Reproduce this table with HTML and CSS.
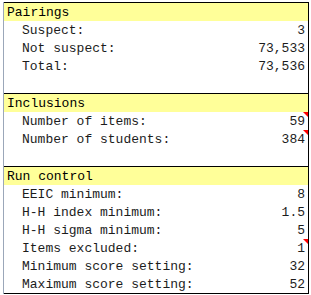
FILE: index.html
```html
<!DOCTYPE html>
<html>
<head>
<meta charset="utf-8">
<link rel="stylesheet" href="styles.css">
</head>
<body>
<div class="sheet">
  <section class="sec">
    <div class="head">Pairings</div>
    <div class="row"><span class="lab">Suspect:</span><span class="val">3</span></div>
    <div class="row"><span class="lab">Not suspect:</span><span class="val">73,533</span></div>
    <div class="row"><span class="lab">Total:</span><span class="val">73,536</span></div>
    <div class="row"></div>
  </section>
  <section class="sec">
    <div class="head">Inclusions</div>
    <div class="row"><span class="lab">Number of items:</span><span class="val note">59</span></div>
    <div class="row"><span class="lab">Number of students:</span><span class="val note">384</span></div>
    <div class="row"></div>
  </section>
  <section class="sec last">
    <div class="head">Run control</div>
    <div class="row"><span class="lab">EEIC minimum:</span><span class="val">8</span></div>
    <div class="row"><span class="lab">H-H index minimum:</span><span class="val">1.5</span></div>
    <div class="row"><span class="lab">H-H sigma minimum:</span><span class="val">5</span></div>
    <div class="row"><span class="lab">Items excluded:</span><span class="val note">1</span></div>
    <div class="row"><span class="lab">Minimum score setting:</span><span class="val">32</span></div>
    <div class="row"><span class="lab">Maximum score setting:</span><span class="val">52</span></div>
  </section>
</div>
</body>
</html>
```
FILE: styles.css
```css
html, body {
  margin: 0;
  padding: 0;
  background: #fff;
}
body {
  font-family: "Liberation Mono", "Courier New", monospace;
  font-size: 13px;
  color: #1c1c1c;
}
.sheet {
  margin: 2px 0 0 3px;
  width: 304px;
  border-left: 1px solid #9ba7b9;
  border-right: 1px solid #000;
}
.sec {
  border-top: 1px solid #000;
}
.sec.last {
  border-bottom: 1px solid #000;
}
.head {
  box-sizing: border-box;
  height: 18px;
  padding-top: 2px;
  line-height: 16px;
  background: #ffff99;
  padding-left: 3px;
  color: #000;
}
.row {
  box-sizing: border-box;
  height: 18px;
  padding-top: 2px;
  line-height: 16px;
  display: flex;
  justify-content: space-between;
  padding-left: 18px;
  padding-right: 3px;
  position: relative;
}
.val {
  text-align: right;
}
.note::after {
  content: "";
  position: absolute;
  top: 0;
  right: 0;
  width: 0;
  height: 0;
  border-top: 5px solid #ff0000;
  border-left: 5px solid transparent;
}
```
